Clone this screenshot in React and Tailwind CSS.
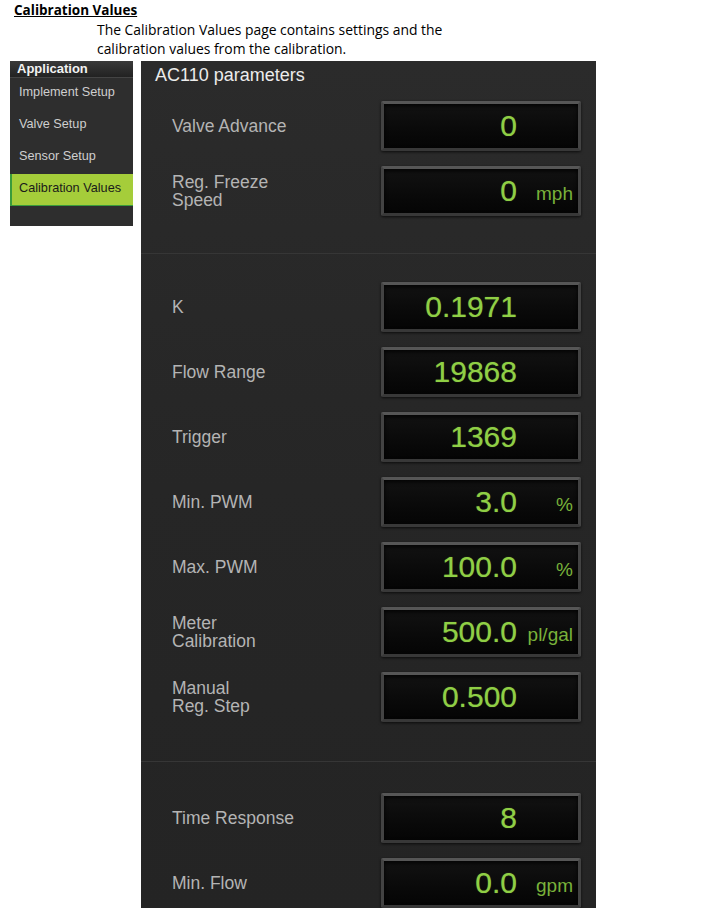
const sideItems = ['Implement Setup', 'Valve Setup', 'Sensor Setup'];

const sections = [
  {
    pad: 'pt-0 pb-[37px]',
    rows: [
      { label: 'Valve Advance', value: '0' },
      { label: ['Reg. Freeze', 'Speed'], value: '0', unit: 'mph' },
    ],
  },
  {
    pad: 'pt-[28px] pb-[39px]',
    rows: [
      { label: 'K', value: '0.1971' },
      { label: 'Flow Range', value: '19868' },
      { label: 'Trigger', value: '1369' },
      { label: 'Min. PWM', value: '3.0', unit: '%' },
      { label: 'Max. PWM', value: '100.0', unit: '%' },
      { label: ['Meter', 'Calibration'], value: '500.0', unit: 'pl/gal' },
      { label: ['Manual', 'Reg. Step'], value: '0.500' },
    ],
  },
  {
    pad: 'pt-[31px]',
    rows: [
      { label: 'Time Response', value: '8' },
      { label: 'Min. Flow', value: '0.0', unit: 'gpm' },
    ],
  },
];

function ValueBox({ value, unit }) {
  return (
    <div className="w-[200px] h-[50px] shrink-0 rounded-[2px] border-[3px] border-[#434343] border-t-[#565656] border-b-[#383838] bg-gradient-to-b from-[#121212] to-[#050505] shadow-[0_1px_3px_rgba(0,0,0,0.7),inset_0_2px_4px_rgba(0,0,0,0.9)] flex items-center">
      <div className="w-[133px] text-right text-[30px] leading-none text-[#8fcf45] [text-shadow:0_0_1px_rgba(143,207,69,0.6)]">
        {value}
      </div>
      <div className="flex-1 self-end pb-[10px] pr-[5px] text-right text-[19px] leading-none text-[#79b23a]">
        {unit}
      </div>
    </div>
  );
}

function Row({ label, value, unit }) {
  return (
    <div className="flex items-center h-[50px]">
      <div className="flex-1 pl-[31px] text-[17.5px] leading-[18px] text-[#b4b4b4]">
        {Array.isArray(label) ? label.map((l) => <div key={l}>{l}</div>) : label}
      </div>
      <div className="mr-[15px]">
        <ValueBox value={value} unit={unit} />
      </div>
    </div>
  );
}

export default function App() {
  return (
    <div className="w-[709px] h-[908px] overflow-hidden bg-white" style={{ fontFamily: '"Liberation Sans", Arial, sans-serif' }}>
      <div className="pl-[14px] pt-[1px] leading-[19px] text-black" style={{ fontFamily: '"Open Sans", "Liberation Sans", sans-serif' }}>
        <div className="font-bold underline text-[13.5px]">Calibration Values</div>
        <div className="pl-[83px] text-[13.9px]">
          <div>The Calibration Values page contains settings and the</div>
          <div>calibration values from the calibration.</div>
        </div>
      </div>

      <div className="flex items-start mt-[3px]">
        {/* side menu */}
        <div className="ml-[10px] w-[123px] h-[165px] bg-[#2e2e2e]">
          <div className="h-[17px] pl-[7px] bg-gradient-to-b from-[#3a3a3a] to-[#222] border-b border-[#444] text-[13px] leading-[16px] font-bold text-[#f2f2f2]">
            Application
          </div>
          {sideItems.map((s) => (
            <div key={s} className="h-[32px] pl-[9px] pt-[6px] text-[12.7px] leading-[16px] text-[#cfcfcf]">
              {s}
            </div>
          ))}
          <div className="h-[32px] pl-[7px] pt-[6px] bg-[#a5cd3a] border-l-[2px] border-b border-[#3a9b3c] text-[12.7px] leading-[16px] text-[#1a1a1a]">
            Calibration Values
          </div>
        </div>

        {/* parameters panel */}
        <div className="ml-[8px] w-[455px] h-[847px] overflow-hidden bg-gradient-to-b from-[#2b2b2b] via-[#262626] to-[#242424]">
          <div className="h-[40px] pl-[14px] pt-[4px] text-[18px] leading-[20px] text-[#ececec]">
            AC110 parameters
          </div>
          {sections.map((sec, i) => (
            <div key={i} className={`${sec.pad} ${i > 0 ? 'border-t border-[#363636]' : ''} flex flex-col gap-[15px]`}>
              {sec.rows.map((r) => (
                <Row key={r.value + String(r.label)} {...r} />
              ))}
            </div>
          ))}
        </div>
      </div>
    </div>
  );
}
